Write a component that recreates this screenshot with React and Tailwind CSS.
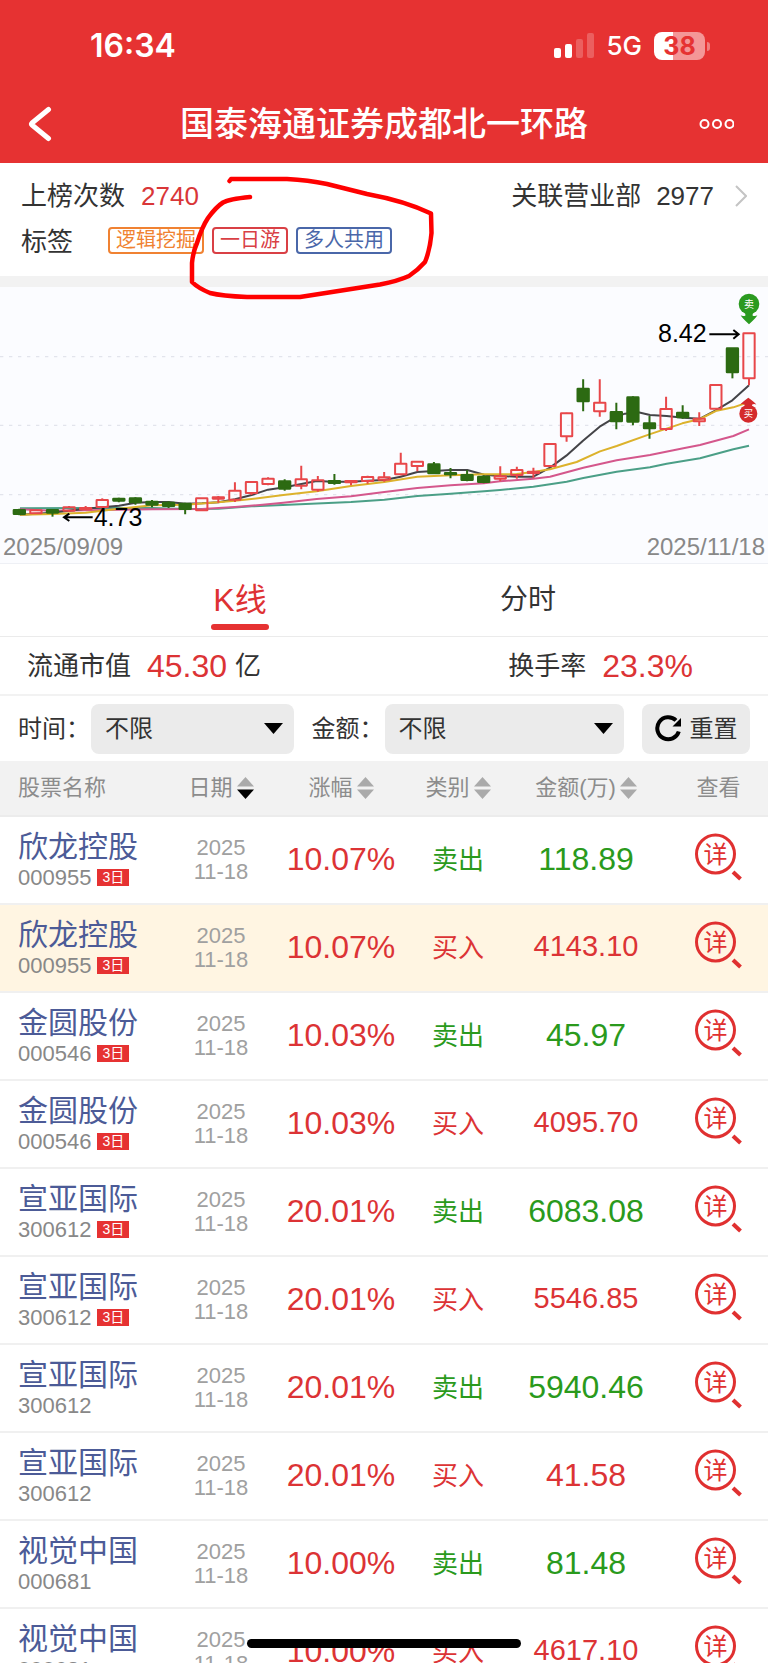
import { useState } from "react";

// body top, body bottom, high, low, in chart units
const candles = [
  ["down", 690, 702, 686, 706],
  ["up", 691, 700, 691, 700],
  ["down", 690, 698, 690, 710],
  ["up", 682, 692, 678, 696],
  ["up", 684, 688, 678, 690],
  ["up", 660, 681, 655, 681],
  ["down", 656, 662, 653, 667],
  ["down", 655, 667, 652, 674],
  ["down", 665, 674, 660, 682],
  ["down", 668, 678, 664, 684],
  ["down", 671, 687, 668, 703],
  ["up", 655, 691, 655, 691],
  ["up", 652, 656, 648, 668],
  ["up", 632, 659, 607, 666],
  ["up", 606, 639, 604, 645],
  ["up", 596, 612, 592, 616],
  ["down", 604, 626, 598, 632],
  ["up", 598, 617, 557, 628],
  ["up", 601, 629, 588, 635],
  ["down", 603, 609, 582, 614],
  ["up", 603, 607, 602, 616],
  ["up", 591, 603, 587, 611],
  ["up", 592, 599, 576, 605],
  ["up", 551, 583, 518, 586],
  ["up", 545, 558, 543, 574],
  ["down", 553, 580, 546, 582],
  ["down", 579, 583, 564, 595],
  ["down", 585, 600, 570, 604],
  ["down", 590, 606, 586, 610],
  ["up", 589, 596, 559, 604],
  ["up", 570, 585, 560, 596],
  ["up", 575, 579, 563, 594],
  ["up", 492, 558, 490, 560],
  ["up", 400, 469, 398, 485],
  ["down", 326, 364, 298, 394],
  ["up", 368, 394, 298, 410],
  ["down", 396, 424, 368, 448],
  ["down", 352, 425, 349, 436],
  ["down", 430, 445, 408, 476],
  ["up", 387, 447, 350, 453],
  ["down", 398, 412, 376, 416],
  ["up", 416, 424, 397, 438],
  ["up", 315, 386, 315, 386],
  ["down", 205, 277, 205, 295],
  ["up", 160, 295, 160, 316],
];

const averages = [
  {
    color: "#4b9f87",
    points:
      "60,685 257,684 457,684 556,687 655,686 755,679 900,673 1053,666 1153,659 1252,648 1352,641 1452,634 1500,630 1600,620 1700,605 1750,594 1850,575 1950,562 2000,551 2100,535 2200,508 2247,497",
  },
  {
    color: "#d4578c",
    points:
      "60,688 158,692 307,690 457,688 606,687 705,681 780,675 850,668 950,657 1053,649 1153,636 1252,624 1352,616 1452,610 1500,604 1600,596 1650,590 1750,563 1850,541 1950,525 2050,505 2100,495 2200,468 2247,448",
  },
  {
    color: "#444448",
    points:
      "60,704 158,698 257,686 357,677 407,668 457,666 506,666 556,671 606,670 655,667 705,658 755,645 804,629 854,622 904,612 950,603 1000,605 1053,605 1103,602 1153,600 1202,590 1252,576 1302,573 1352,570 1402,570 1452,584 1500,588 1550,590 1600,590 1650,563 1699,527 1749,482 1799,440 1849,410 1875,401 1915,397 1950,405 2000,408 2050,413 2100,416 2147,391 2197,361 2247,316",
  },
  {
    color: "#dcb22c",
    points:
      "60,704 158,702 257,698 357,686 457,676 556,674 655,667 705,662 780,654 850,645 950,634 1053,618 1153,606 1252,590 1352,586 1450,583 1500,583 1550,582 1600,576 1650,568 1730,546 1800,514 1850,498 1948,463 2047,430 2100,417 2150,392 2200,382 2247,366",
  },
];

const rows = [
  { name: "欣龙控股", code: "000955", days: "3日", change: "10.07%", type: "卖出", amount: "118.89" },
  { name: "欣龙控股", code: "000955", days: "3日", change: "10.07%", type: "买入", amount: "4143.10", active: true },
  { name: "金圆股份", code: "000546", days: "3日", change: "10.03%", type: "卖出", amount: "45.97" },
  { name: "金圆股份", code: "000546", days: "3日", change: "10.03%", type: "买入", amount: "4095.70" },
  { name: "宣亚国际", code: "300612", days: "3日", change: "20.01%", type: "卖出", amount: "6083.08" },
  { name: "宣亚国际", code: "300612", days: "3日", change: "20.01%", type: "买入", amount: "5546.85" },
  { name: "宣亚国际", code: "300612", change: "20.01%", type: "卖出", amount: "5940.46" },
  { name: "宣亚国际", code: "300612", change: "20.01%", type: "买入", amount: "41.58" },
  { name: "视觉中国", code: "000681", change: "10.00%", type: "卖出", amount: "81.48" },
  { name: "视觉中国", code: "000681", change: "10.00%", type: "买入", amount: "4617.10" },
];

const StatusBar = () => (
  <div className="flex h-[86px] items-center justify-between pt-1.5 pr-[58px] pl-[90px] font-['Inter',sans-serif] text-white">
    <span className="text-[32px] leading-8 font-semibold">16:34</span>
    <div className="flex items-center gap-3">
      <svg className="h-[26px] w-10" viewBox="0 0 40 26" fill="#fff">
        <rect x="0" y="15" width="7" height="10" rx="2" />
        <rect x="11" y="11" width="7" height="14" rx="2" />
        <rect x="22" y="6" width="7" height="19" rx="2" opacity="0.22" />
        <rect x="33" y="0" width="7" height="25" rx="2" opacity="0.22" />
      </svg>
      <span className="text-[26px] leading-8 font-medium">5G</span>
      <div className="flex items-center gap-0.5">
        <span className="flex h-7 w-[51px] items-center justify-center rounded-lg bg-linear-to-r from-white from-38% to-[#f49797] to-38% text-[25px] leading-7 font-bold text-[#e63232]">
          38
        </span>
        <span className="h-[9px] w-[3px] rounded-r-full bg-[#f07f7f]"></span>
      </div>
    </div>
  </div>
);

const NavBar = () => (
  <div className="flex h-[77px] items-center justify-between px-[26px] pb-0.5 text-white">
    <button type="button" aria-label="返回" className="w-11">
      <svg className="h-9 w-7" viewBox="0 0 28 36" fill="none" stroke="#fff" strokeWidth="5" strokeLinecap="round" strokeLinejoin="round">
        <path d="M22.5 3.5 L6 17 Q5 18 6 19 L22.5 32.5" />
      </svg>
    </button>
    <h1 className="text-[34px] leading-10 font-medium">国泰海通证券成都北一环路</h1>
    <button type="button" aria-label="更多" className="w-11">
      <svg className="h-3 w-9" viewBox="0 0 36 12" fill="none" stroke="#fff" strokeWidth="2">
        <circle cx="6.500" cy="6" r="4" />
        <circle cx="19" cy="6" r="4" />
        <circle cx="31.500" cy="6" r="4" />
      </svg>
    </button>
  </div>
);

const Summary = () => (
  <section className="relative border-b-[11px] border-[#f2f2f2] px-[21px] pt-2.5 pb-[11px] text-[26px] leading-8 text-[#333]">
    <div className="flex h-[46px] items-center justify-between">
      <div className="flex items-center gap-4">
        <span>上榜次数</span>
        <span className="text-[#d93638]">2740</span>
      </div>
      <a href="#branches" className="flex items-center gap-[15px]">
        <span>关联营业部</span>
        <span>2977</span>
        <svg className="ml-1.5 h-[22px] w-3" viewBox="0 0 12 22" fill="none" stroke="#c4c4c4" strokeWidth="2">
          <path d="M1 1 L11 11 L1 21" />
        </svg>
      </a>
    </div>
    <div className="flex h-[46px] items-center">
      <span className="w-[87px]">标签</span>
      <div className="flex gap-2 pb-1 text-xl leading-[23px]">
        <span className="rounded border-2 border-[#f08232] px-1.5 text-[#f08232]">逻辑挖掘</span>
        <span className="rounded border-2 border-[#d94045] px-1.5 text-[#d94045]">一日游</span>
        <span className="rounded border-2 border-[#4a67a9] px-1.5 text-[#4a67a9]">多人共用</span>
      </div>
    </div>
    {/* hand drawn marker around the last two tags */}
    <svg
      className="pointer-events-none absolute top-0 left-[180px] z-10 h-[140px] w-[260px]"
      viewBox="180 163 260 140"
      fill="none"
      stroke="#f00"
      strokeWidth="4.5"
      strokeLinecap="round"
      strokeLinejoin="round"
    >
      <path d="M229.500 181 L231 179 L287 179 Q308 180 327 184 L367 194 Q405 201 431 213.500 L431.500 233 Q430 250 425 262 Q418 270 409 276 Q398 281 380 284.500 L300 297 L247 297 Q222 296 210 293 Q198 288 192 282 L192 263 Q193 252 197 243 Q202 227 208 218 Q216 207 223 202.500 Q229 199 250 197" />
    </svg>
  </section>
);

const Candle = ({ index, data }) => {
  const [kind, top, bottom, high, low] = data;
  const x = 58 + index * 49.75;
  const color = kind === "up" ? "#e8474a" : "#2c6a12";
  return (
    <g stroke={color} strokeWidth="6" fill={kind === "up" ? "none" : color}>
      <path d={`M${x} ${high}V${top}M${x} ${bottom}V${low}`} />
      <rect x={x - 17} y={top} width="34" height={bottom - top} rx="1" />
    </g>
  );
};

const Chart = () => (
  <section className="border-b border-[#eef0f5] bg-[#fbfcff]">
    <svg
      className="block h-auto w-full font-['Liberation_Sans','Noto_Sans_CJK_SC',sans-serif]"
      viewBox="0 21 2304 729"
      role="img"
      aria-label="K线图"
    >
      <path d="M0 230H2304M0 436H2304M0 644H2304" stroke="#e2e4ec" strokeWidth="4" strokeDasharray="10 17" />
      {averages.map((line) => (
        <polyline key={line.color} points={line.points} fill="none" stroke={line.color} strokeWidth="6" strokeLinejoin="round" />
      ))}
      {candles.map((data, index) => (
        <Candle key={index} index={index} data={data} />
      ))}
      <g fill="none" stroke="#000" strokeWidth="6">
        <path d="M278 712H192M208 701L192 712L208 723" />
        <path d="M2128 163H2216M2200 150L2216 163L2200 176" />
      </g>
      <text x="281" y="737" fontSize="75">4.73</text>
      <text x="1974" y="186" fontSize="75">8.42</text>
      <g fill="#2b9a20">
        <circle cx="2247" cy="72" r="31" />
        <path d="M2236 98H2258V107Q2266 110 2272 106Q2270 112 2247 133Q2224 112 2222 106Q2228 110 2236 107Z" />
      </g>
      <text x="2247" y="83" fontSize="30" textAnchor="middle" fill="#fff">卖</text>
      <g fill="#d42a2c">
        <circle cx="2245" cy="401" r="27" />
        <path d="M2234 380H2256V374Q2263 370 2269 374Q2266 368 2245 353Q2224 368 2221 374Q2227 370 2234 374Z" />
      </g>
      <text x="2245" y="412" fontSize="28" textAnchor="middle" fill="#fff">买</text>
    </svg>
    <div className="flex h-[33px] items-center justify-between px-[3px] text-2xl text-[#888]">
      <span>2025/09/09</span>
      <span>2025/11/18</span>
    </div>
  </section>
);

const Tabs = ({ tab, setTab }) => (
  <div className="grid h-[73px] grid-cols-2 border-b border-[#ebebeb] px-[12.5%]" role="tablist">
    {["K线", "分时"].map((name) => (
      <button key={name} type="button" role="tab" aria-selected={tab === name} className="flex justify-center" onClick={() => setTab(name)}>
        <span
          className={
            tab === name
              ? "relative h-full px-0.5 pt-3 text-[32px] leading-[48px] text-[#de3133] after:absolute after:bottom-1.5 after:left-0 after:h-1.5 after:w-full after:rounded-full after:bg-[#e63232]"
              : "h-full pt-3 text-[28px] leading-[48px] text-[#333]"
          }
        >
          {name}
        </span>
      </button>
    ))}
  </div>
);

const Figures = () => (
  <div className="flex h-[59px] items-center justify-between border-b-2 border-[#f2f2f2] pr-[75px] pl-[27px] text-[26px] leading-8 text-[#333]">
    <div className="flex items-center">
      <span>流通市值</span>
      <span className="mr-2 ml-4 text-[32px] text-[#dc3335]">45.30</span>
      <span>亿</span>
    </div>
    <div className="flex items-center">
      <span>换手率</span>
      <span className="ml-4 text-[32px] text-[#dc3335]">23.3%</span>
    </div>
  </div>
);

const FilterSelect = ({ id, value, onChange, options, className }) => (
  <div className={`relative ${className}`}>
    <select
      id={id}
      value={value}
      onChange={(event) => onChange(event.target.value)}
      className="h-[50px] w-full appearance-none rounded-lg bg-[#ebebeb] px-3.5 text-2xl text-[#333]"
    >
      {options.map((option) => (
        <option key={option}>{option}</option>
      ))}
    </select>
    <svg className="pointer-events-none absolute top-[19px] right-[11px] h-[11px] w-[19px]" viewBox="0 0 19 11">
      <path d="M0 0H19L9.5 11Z" />
    </svg>
  </div>
);

const Filters = () => {
  const [time, setTime] = useState("不限");
  const [amount, setAmount] = useState("不限");

  const reset = () => {
    setTime("不限");
    setAmount("不限");
  };

  return (
    <div className="flex h-[65px] items-center px-[18px] text-2xl text-[#333]">
      <label htmlFor="time" className="mr-px shrink-0">
        时间：
      </label>
      <FilterSelect id="time" value={time} onChange={setTime} options={["不限", "近一月", "近三月"]} className="flex-11" />
      <label htmlFor="amount" className="mr-px ml-[18px] shrink-0">
        金额：
      </label>
      <FilterSelect id="amount" value={amount} onChange={setAmount} options={["不限", "1000万以上", "5000万以上"]} className="flex-13" />
      <button
        type="button"
        onClick={reset}
        className="ml-[18px] flex h-[50px] w-[108px] shrink-0 items-center justify-center gap-2 rounded-lg bg-[#ebebeb]"
      >
        <svg className="size-[27px]" viewBox="0 0 27 27">
          <path d="M23.8 16.500A11 11 0 1 1 21 5.400" fill="none" stroke="#000" strokeWidth="4" />
          <path d="M26 3V11.500H17.500Z" />
        </svg>
        重置
      </button>
    </div>
  );
};

const SortHeader = ({ children, active, onClick }) => (
  <th className="font-normal">
    <button type="button" onClick={onClick} className="inline-flex items-center gap-1">
      {children}
      <svg className="h-[22px] w-[17px]" viewBox="0 0 17 22">
        <path d="M8.500 0L17 9.500H0Z" fill="#aaa" />
        <path d="M8.500 22L17 12.500H0Z" fill={active ? "#000" : "#aaa"} />
      </svg>
    </button>
  </th>
);

const amountClass = (row) => {
  if (row.type === "卖出") return "pb-0.5 text-[32px] text-[#2a9a1c]";
  return row.amount.length > 6 ? "pb-0.5 text-[29px] text-[#dc3335]" : "pb-0.5 text-[32px] text-[#dc3335]";
};

const StockRow = ({ row }) => (
  <tr className={row.active ? "h-[88px] border-b-2 border-[#f0f0f0] bg-[#fff5e2]" : "h-[88px] border-b-2 border-[#f0f0f0]"}>
    <td className="pl-[18px] text-left">
      <div className="text-[30px] leading-[34px] text-[#4c5b97]">{row.name}</div>
      <div className="flex h-[26px] items-center gap-1.5 text-[22px] text-[#888]">
        {row.code}
        {row.days && (
          <span className="flex h-[17px] w-8 items-center justify-center bg-[#e63232] text-sm leading-[17px] text-white">
            {row.days}
          </span>
        )}
      </div>
    </td>
    <td className="text-[22px] leading-6 text-[#a0a0a0]">
      2025
      <br />
      11-18
    </td>
    <td className="pb-0.5 text-[32px] leading-9 text-[#dc3335]">{row.change}</td>
    <td className={row.type === "卖出" ? "text-[26px] leading-8 text-[#2a9a1c]" : "text-[26px] leading-8 text-[#dc3335]"}>{row.type}</td>
    <td className={amountClass(row)}>{row.amount}</td>
    <td className="pb-1.5 pl-3">
      <button type="button" aria-label={`查看${row.name}`} className="mx-auto block">
        <svg className="size-12" viewBox="0 0 48 48" fill="none" stroke="#e03030">
          <circle cx="20.500" cy="21" r="19" strokeWidth="3" />
          <path d="M38 39L45.500 46" strokeWidth="4" />
          <text x="20.500" y="30" fontSize="24" textAnchor="middle" fill="#e03030" stroke="none">
            详
          </text>
        </svg>
      </button>
    </td>
  </tr>
);

const StockTable = () => {
  const [sort, setSort] = useState("日期");

  return (
    <table className="w-full table-fixed border-collapse text-center">
      <colgroup>
        <col />
        <col className="w-[120px]" />
        <col className="w-[120px]" />
        <col className="w-[114px]" />
        <col className="w-[142px]" />
        <col className="w-[111px]" />
      </colgroup>
      <thead>
        <tr className="h-[55px] border-b-2 border-[#ececec] bg-[#f2f2f2] text-[22px] leading-8 text-[#8c8c8c]">
          <th className="pl-[18px] text-left font-normal">股票名称</th>
          {["日期", "涨幅", "类别", "金额(万)"].map((name) => (
            <SortHeader key={name} active={sort === name} onClick={() => setSort(name)}>
              {name}
            </SortHeader>
          ))}
          <th className="pl-3 font-normal">查看</th>
        </tr>
      </thead>
      <tbody>
        {rows.map((row, index) => (
          <StockRow key={index} row={row} />
        ))}
      </tbody>
    </table>
  );
};

const App = () => {
  const [tab, setTab] = useState("K线");

  return (
    <div className="relative h-screen overflow-hidden bg-white font-['Liberation_Sans','Noto_Sans_CJK_SC',sans-serif]">
      <header className="bg-[#e63232]">
        <StatusBar />
        <NavBar />
      </header>
      <Summary />
      <Chart />
      <Tabs tab={tab} setTab={setTab} />
      <Figures />
      <Filters />
      <StockTable />
      <div className="absolute bottom-[15px] left-1/2 h-[9px] w-[274px] -translate-x-1/2 rounded-full bg-black"></div>
    </div>
  );
};

export default App;
